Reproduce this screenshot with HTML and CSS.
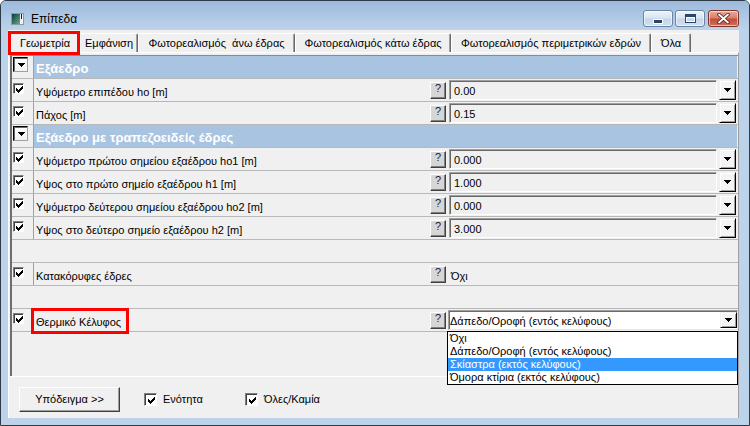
FILE: index.html
```html
<!DOCTYPE html>
<html lang="el">
<head>
<meta charset="utf-8">
<title>Επίπεδα</title>
<link rel="stylesheet" href="styles.css">
</head>
<body>
<div class="window">
  <div class="titlebar">
    <svg class="app-icon" viewBox="0 0 13 12" width="13" height="12">
      <defs>
        <linearGradient id="ig" x1="0" y1="0" x2="1" y2="1">
          <stop offset="0" stop-color="#0b3f3c"/>
          <stop offset="1" stop-color="#6aa68a"/>
        </linearGradient>
      </defs>
      <rect x="0.5" y="0.5" width="12" height="11" fill="#eef2f4" stroke="#8c9aa5"/>
      <rect x="1" y="1" width="8" height="10" fill="url(#ig)"/>
      <rect x="10" y="1" width="1" height="5" fill="#1b1b1b"/>
    </svg>
    <span class="title">Επίπεδα</span>
    <div class="controls">
      <span class="ctl ctl-min">
        <svg width="10" height="5" viewBox="0 0 10 5"><rect x="0.5" y="0.5" width="9" height="4" fill="#2c4565" stroke="#ffffff"/></svg>
      </span>
      <span class="ctl ctl-max">
        <svg width="11" height="9" viewBox="0 0 11 9"><rect x="0.5" y="0.5" width="10" height="8" fill="none" stroke="#2c4565"/><rect x="1" y="1" width="9" height="2" fill="#2c4565"/><rect x="1.5" y="3.5" width="8" height="4" fill="none" stroke="#ffffff"/></svg>
      </span>
      <span class="ctl ctl-close">
        <svg width="13" height="11" viewBox="0 0 13 11"><path d="M2 1.5 L11 9.5 M11 1.5 L2 9.5" stroke="#5b2118" stroke-width="3.6" stroke-linecap="round"/><path d="M2 1.5 L11 9.5 M11 1.5 L2 9.5" stroke="#ffffff" stroke-width="1.8" stroke-linecap="round"/></svg>
      </span>
    </div>
  </div>

  <div class="client">
    <div class="tabs">
      <div class="tab tab-active tab-geo">Γεωμετρία<span class="mark mark-tab"></span></div>
      <div class="tab tab-look">Εμφάνιση</div>
      <div class="tab tab-top">Φωτορεαλισμός  άνω έδρας</div>
      <div class="tab tab-bottom">Φωτορεαλισμός κάτω έδρας</div>
      <div class="tab tab-side">Φωτορεαλισμός περιμετρικών εδρών</div>
      <div class="tab tab-all">Όλα</div>
    </div>

    <div class="page">
      <div class="grid">
        <div class="row row-cat">
          <span class="chk-col"><span class="cat-box"><svg width="7" height="4"><use href="#tri"/></svg></span></span>
          <span class="cat-label">Εξάεδρο</span>
        </div>
        <div class="row">
          <span class="chk-col"><span class="check"><svg width="7" height="7"><use href="#chk"/></svg></span></span>
          <span class="label">Υψόμετρο επιπέδου ho [m]</span>
          <span class="help">?</span>
          <span class="field">0.00</span>
          <span class="drop"><svg width="7" height="4"><use href="#tri"/></svg></span>
        </div>
        <div class="row">
          <span class="chk-col"><span class="check"><svg width="7" height="7"><use href="#chk"/></svg></span></span>
          <span class="label">Πάχος [m]</span>
          <span class="help">?</span>
          <span class="field">0.15</span>
          <span class="drop"><svg width="7" height="4"><use href="#tri"/></svg></span>
        </div>
        <div class="row row-cat">
          <span class="chk-col"><span class="cat-box"><svg width="7" height="4"><use href="#tri"/></svg></span></span>
          <span class="cat-label">Εξάεδρο με τραπεζοειδείς έδρες</span>
        </div>
        <div class="row">
          <span class="chk-col"><span class="check"><svg width="7" height="7"><use href="#chk"/></svg></span></span>
          <span class="label">Υψόμετρο πρώτου σημείου εξαέδρου ho1 [m]</span>
          <span class="help">?</span>
          <span class="field">0.000</span>
          <span class="drop"><svg width="7" height="4"><use href="#tri"/></svg></span>
        </div>
        <div class="row">
          <span class="chk-col"><span class="check"><svg width="7" height="7"><use href="#chk"/></svg></span></span>
          <span class="label">Υψος στο πρώτο σημείο εξαέδρου h1 [m]</span>
          <span class="help">?</span>
          <span class="field">1.000</span>
          <span class="drop"><svg width="7" height="4"><use href="#tri"/></svg></span>
        </div>
        <div class="row">
          <span class="chk-col"><span class="check"><svg width="7" height="7"><use href="#chk"/></svg></span></span>
          <span class="label">Υψόμετρο δεύτερου σημείου εξαέδρου ho2 [m]</span>
          <span class="help">?</span>
          <span class="field">0.000</span>
          <span class="drop"><svg width="7" height="4"><use href="#tri"/></svg></span>
        </div>
        <div class="row">
          <span class="chk-col"><span class="check"><svg width="7" height="7"><use href="#chk"/></svg></span></span>
          <span class="label">Υψος στο δεύτερο σημείο εξαέδρου h2 [m]</span>
          <span class="help">?</span>
          <span class="field">3.000</span>
          <span class="drop"><svg width="7" height="4"><use href="#tri"/></svg></span>
        </div>
        <div class="row row-empty"></div>
        <div class="row">
          <span class="chk-col"><span class="check"><svg width="7" height="7"><use href="#chk"/></svg></span></span>
          <span class="label">Κατακόρυφες έδρες</span>
          <span class="help">?</span>
          <span class="plain">Όχι</span>
        </div>
        <div class="row row-empty"></div>
        <div class="row">
          <span class="chk-col"><span class="check"><svg width="7" height="7"><use href="#chk"/></svg></span></span>
          <span class="label">Θερμικό Κέλυφος<span class="mark mark-label"></span></span>
          <span class="help">?</span>
          <span class="combo">
            <span class="combo-text">Δάπεδο/Οροφή (εντός κελύφους)</span>
            <span class="drop drop-in"><svg width="7" height="4"><use href="#tri"/></svg></span>
          </span>
        </div>
      </div>

      <div class="footer">
        <span class="btn">Υπόδειγμα &gt;&gt;</span>
        <span class="opt"><span class="check check-lg"><svg width="7" height="7"><use href="#chk"/></svg></span>Ενότητα</span>
        <span class="opt"><span class="check check-lg"><svg width="7" height="7"><use href="#chk"/></svg></span>Όλες/Καμία</span>
      </div>
    </div>
  </div>

  <ul class="list">
    <li>Όχι</li>
    <li>Δάπεδο/Οροφή (εντός κελύφους)</li>
    <li class="sel">Σκίαστρα (εκτός κελύφους)</li>
    <li>Όμορα κτίρια (εκτός κελύφους)</li>
  </ul>
</div>

<svg class="defs" width="0" height="0">
  <symbol id="chk" viewBox="0 0 7 7">
    <path shape-rendering="crispEdges" fill="#000" d="M6 0h1v1h-1z M5 1h2v1h-2z M0 2h1v1h-1z M4 2h3v1h-3z M0 3h2v1h-2z M3 3h3v1h-3z M0 4h5v1h-5z M1 5h3v1h-3z M2 6h1v1h-1z"/>
  </symbol>
  <symbol id="tri" viewBox="0 0 7 4">
    <path shape-rendering="crispEdges" fill="#000" d="M0 0h7v1h-1v1h-1v1h-1v1h-1v-1h-1v-1h-1v-1h-1z"/>
  </symbol>
</svg>
</body>
</html>
```

FILE: styles.css
```css
* { box-sizing: border-box; }

html, body {
  margin: 0;
  padding: 0;
  background: #ffffff;
}

body {
  font-family: "Liberation Sans", Arial, sans-serif;
  font-size: 11px;
  color: #000;
}

.defs { display: block; overflow: hidden; }

.window {
  position: relative;
  width: 750px;
  height: 426px;
  border: 1px solid #2e3a47;
  border-radius: 6px 6px 0 0;
  background: #bcd3ea;
  display: flex;
  flex-direction: column;
  overflow: hidden;
}

/* ---------- title bar ---------- */
.titlebar {
  flex: none;
  height: 29px;
  display: flex;
  align-items: flex-start;
  padding: 0 10px;
  background: linear-gradient(#9dbadb, #afc8e5 55%, #bdd3ea);
}

.app-icon { margin-top: 12px; flex: none; }

.title {
  margin: 11px 0 0 7px;
  font-size: 12px;
  line-height: 14px;
}

.controls {
  margin-left: auto;
  margin-top: 9px;
  display: flex;
}

.ctl {
  width: 30px;
  height: 17px;
  border: 1px solid #6c84a3;
  border-radius: 3px;
  background: linear-gradient(#edf3fa, #d8e5f3 48%, #c3d5ea 52%, #d2e1f1);
  box-shadow: inset 0 0 0 1px rgba(255, 255, 255, 0.55);
  display: flex;
  align-items: center;
  justify-content: center;
}

.ctl-min { align-items: flex-end; padding-bottom: 2px; }
.ctl-max { margin-left: 2px; }
.ctl-close {
  width: 31px;
  margin-left: 3px;
  border-color: #80352a;
  background: linear-gradient(#eaa99b, #d7806c 48%, #c54b35 52%, #d06f59);
}

/* ---------- client area ---------- */
.client {
  flex: 1;
  margin: 0 10px 7px 7px;
  background: #f0f0f0;
  display: flex;
  flex-direction: column;
}

.tabs {
  flex: none;
  height: 22px;
  display: flex;
  align-items: flex-end;
  padding-left: 2px;
  position: relative;
  z-index: 1;
}

.tab {
  height: 19px;
  background: #f0f0f0;
  border-top: 1px solid #ffffff;
  border-left: 1px solid #ffffff;
  border-right: 1px solid #696969;
  border-radius: 2px 2px 0 0;
  box-shadow: inset -1px 0 #a0a0a0;
  text-align: center;
  padding-top: 1px;
  line-height: 17px;
  white-space: pre;
}

.tab-active {
  height: 22px;
  margin-bottom: -1px;
  padding-top: 3px;
  position: relative;
}

.tab-geo { width: 70px; }
.tab-look { width: 58px; }
.tab-top { width: 157px; }
.tab-bottom { width: 156px; }
.tab-side { width: 200px; }
.tab-all { width: 40px; }

.mark {
  position: absolute;
  border: 3px solid #ff0000;
  pointer-events: none;
}

.mark-tab { left: -3px; top: -1px; width: 72px; height: 24px; }
.mark-label { left: -3px; top: -1px; width: 98px; height: 26px; }

.page {
  flex: 1;
  display: flex;
  flex-direction: column;
  border-top: 1px solid #ffffff;
  border-left: 1px solid #ffffff;
  border-right: 1px solid #a0a0a0;
  padding: 2px 0 0 1px;
}

/* ---------- property grid ---------- */
.grid {
  flex: none;
  height: 321px;
  border-top: 1px solid #8a8a8a;
  border-left: 2px solid #6e6e6e;
}

.row {
  display: flex;
  height: 23px;
  border-bottom: 1px solid #b8b8b8;
  padding-right: 2px;
}

.row-cat { padding-right: 1px; }

.chk-col {
  flex: none;
  width: 22px;
  border-right: 1px solid #a0a0a0;
  padding: 4px 0 0 1px;
}

.row-cat .chk-col { padding-top: 1px; }

.check {
  display: flex;
  align-items: center;
  justify-content: center;
  width: 11px;
  height: 11px;
  background: #ffffff;
  border: 1px solid;
  border-color: #808080 #ffffff #ffffff #808080;
  box-shadow: inset 1px 1px #404040;
}

.check svg { margin: 1px 0 0 1px; }

.check-lg {
  width: 13px;
  height: 13px;
  flex: none;
}

.cat-box {
  display: flex;
  align-items: center;
  justify-content: center;
  width: 15px;
  height: 15px;
  background: linear-gradient(#ffffff, #f2f2f2);
  border: 1px solid;
  border-color: #000000 #a0a0a0 #a0a0a0 #000000;
  box-shadow: inset 1px 1px #6a6a6a;
}

.cat-box svg { margin: 1px 0 0 1px; }

.label {
  flex: 1;
  min-width: 0;
  position: relative;
  padding: 5px 0 0 2px;
  line-height: 17px;
  white-space: nowrap;
}

.cat-label {
  flex: 1;
  background: #a9c4e0;
  color: #ffffff;
  font-weight: bold;
  font-size: 13px;
  padding: 4px 0 0 2px;
  line-height: 17px;
  white-space: nowrap;
}

.help {
  flex: none;
  width: 16px;
  height: 17px;
  margin-top: 3px;
  background: #d6d6d6;
  border: 1px solid;
  border-color: #ffffff #404040 #404040 #ffffff;
  box-shadow: inset -1px -1px #808080;
  font-size: 11px;
  line-height: 11px;
  text-align: center;
  color: #222;
}

.field {
  flex: none;
  width: 268px;
  height: 20px;
  margin: 1px 0 0 3px;
  background: #f0f0f0;
  border: 1px solid;
  border-color: #a0a0a0 #ffffff #ffffff #a0a0a0;
  box-shadow: inset 1px 1px #696969;
  padding: 3px 0 0 4px;
  line-height: 15px;
}

.drop {
  flex: none;
  width: 17px;
  height: 20px;
  margin: 1px 0 0 2px;
  display: flex;
  align-items: center;
  justify-content: center;
  background: #f4f4f4;
  border: 1px solid;
  border-color: #f0f0f0 #000000 #000000 #f0f0f0;
  box-shadow: inset 1px 1px #ffffff, inset -1px -1px #a0a0a0;
}

.plain {
  padding: 5px 0 0 5px;
  line-height: 16px;
  width: 290px;
}

.combo {
  flex: none;
  width: 290px;
  height: 20px;
  margin: 1px -2px 0 2px;
  display: flex;
  background: #ffffff;
  border: 1px solid;
  border-color: #a0a0a0 #e3e3e3 #e3e3e3 #a0a0a0;
  box-shadow: inset 1px 1px #696969;
}

.combo-text {
  flex: 1;
  padding: 3px 0 0 1px;
  line-height: 14px;
  white-space: nowrap;
}

.drop-in {
  width: 17px;
  height: 16px;
  margin: 1px 0 0 0;
}

/* ---------- footer ---------- */
.footer {
  flex: 1;
  border-top: 1px solid #ffffff;
  display: flex;
  align-items: flex-start;
  padding: 10px 0 0 9px;
}

.btn {
  flex: none;
  width: 101px;
  height: 25px;
  background: #f0f0f0;
  border: 1px solid;
  border-color: #ffffff #404040 #404040 #ffffff;
  box-shadow: inset -1px -1px #a0a0a0;
  text-align: center;
  line-height: 23px;
}

.opt {
  display: flex;
  align-items: center;
  min-width: 101px;
  margin-top: 6px;
  line-height: 13px;
  gap: 6px;
}

.btn + .opt { margin-left: 24px; }

/* ---------- open dropdown list ---------- */
.list {
  position: absolute;
  left: 446px;
  top: 330px;
  width: 291px;
  height: 54px;
  margin: 0;
  padding: 0;
  list-style: none;
  background: #ffffff;
  border: 1px solid #000000;
  z-index: 2;
}

.list li {
  height: 13px;
  line-height: 13px;
  padding-left: 2px;
  white-space: nowrap;
}

.list .sel {
  background: #3399ff;
  color: #ffffff;
}
```
